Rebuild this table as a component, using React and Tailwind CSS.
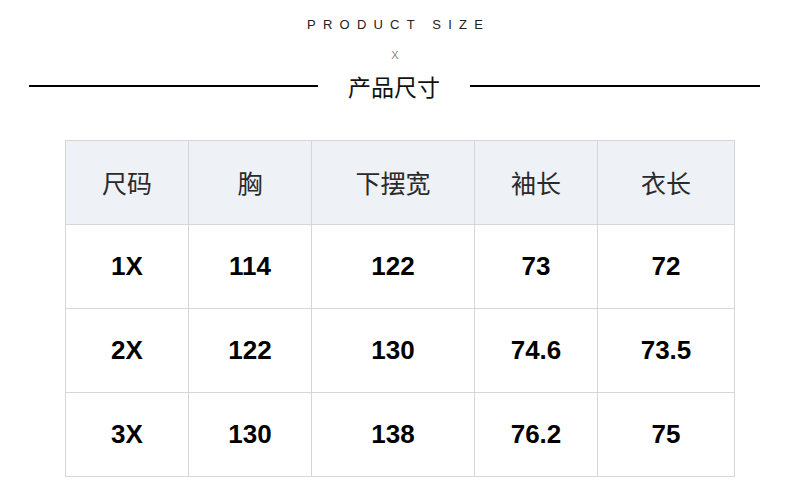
import React from 'react';

const cols = ['尺码', '胸', '下摆宽', '袖长', '衣长'];
const rows = [
  ['1X', '114', '122', '73', '72'],
  ['2X', '122', '130', '74.6', '73.5'],
  ['3X', '130', '138', '76.2', '75'],
];
const widths = ['w-[123px]', 'w-[123px]', 'w-[163px]', 'w-[123px]', 'w-[137px]'];

const App = () => {
  return (
    <div className="w-[790px] h-[496px] bg-white overflow-hidden" style={{ fontFamily: '"Liberation Sans", "Noto Sans CJK SC", sans-serif' }}>
      {/* heading */}
      <div className="h-[48px] flex items-center justify-center">
        <span className="text-[13px] tracking-[7.2px] pl-[7.2px] text-[#222] leading-none">PRODUCT SIZE</span>
      </div>
      <div className="h-[14px] flex items-center justify-center">
        <span className="text-[11px] text-[#888] leading-none">X</span>
      </div>
      <div className="h-[48px] flex items-center">
        <div className="ml-[29px] w-[289px] h-[1.5px] bg-black" />
        <div className="w-[152px] flex justify-center">
          <span className="text-[23px] text-[#111] leading-none" style={{ fontFamily: '"Noto Sans CJK SC", sans-serif' }}>产品尺寸</span>
        </div>
        <div className="w-[290px] h-[1.5px] bg-black" />
      </div>

      {/* size table */}
      <table className="mt-[30px] ml-[65px] border-collapse table-fixed">
        <thead>
          <tr className="bg-[#eef1f5]">
            {cols.map((c, i) => (
              <th
                key={c}
                className={`${widths[i]} h-[84px] border border-[#d6d6d6] text-[25px] font-normal text-[#2a2a2a] text-center align-middle`}
                style={{ fontFamily: '"Noto Sans CJK SC", serif' }}
              >
                {c}
              </th>
            ))}
          </tr>
        </thead>
        <tbody>
          {rows.map((r, ri) => (
            <tr key={ri}>
              {r.map((v, i) => (
                <td key={i} className={`${widths[i]} h-[84px] border border-[#d6d6d6] text-[26px] font-bold text-black text-center align-middle`}>
                  {v}
                </td>
              ))}
            </tr>
          ))}
        </tbody>
      </table>
    </div>
  );
};

export default App;
